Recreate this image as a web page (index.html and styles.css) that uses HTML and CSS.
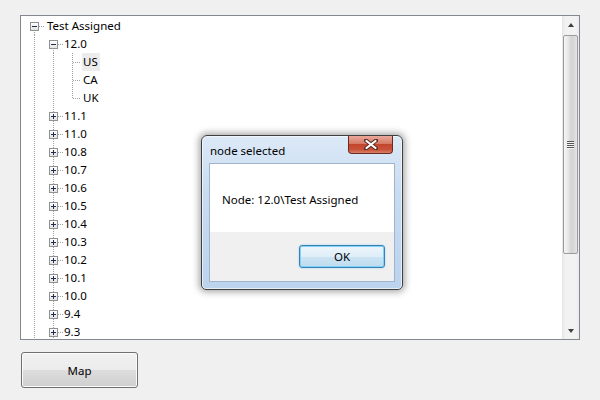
FILE: index.html
```html
<!DOCTYPE html>
<html>
<head>
<meta charset="utf-8">
<link rel="stylesheet" href="styles.css">
</head>
<body>
<div class="app">
  <div class="treebox">
    <div class="tree">
      <div class="row l0"><span class="c vb hb"><span class="pm minus"></span></span><span class="label">Test Assigned</span></div>
      <div class="row l1"><span class="c v"></span><span class="c vb hb"><span class="pm minus"></span></span><span class="label">12.0</span></div>
      <div class="row l2"><span class="c v"></span><span class="c v"></span><span class="c v h"></span><span class="label sel">US</span></div>
      <div class="row l2"><span class="c v"></span><span class="c v"></span><span class="c v h"></span><span class="label">CA</span></div>
      <div class="row l2"><span class="c v"></span><span class="c v"></span><span class="c vt h"></span><span class="label">UK</span></div>
      <div class="row l1"><span class="c v"></span><span class="c v hb"><span class="pm plus"></span></span><span class="label">11.1</span></div>
      <div class="row l1"><span class="c v"></span><span class="c v hb"><span class="pm plus"></span></span><span class="label">11.0</span></div>
      <div class="row l1"><span class="c v"></span><span class="c v hb"><span class="pm plus"></span></span><span class="label">10.8</span></div>
      <div class="row l1"><span class="c v"></span><span class="c v hb"><span class="pm plus"></span></span><span class="label">10.7</span></div>
      <div class="row l1"><span class="c v"></span><span class="c v hb"><span class="pm plus"></span></span><span class="label">10.6</span></div>
      <div class="row l1"><span class="c v"></span><span class="c v hb"><span class="pm plus"></span></span><span class="label">10.5</span></div>
      <div class="row l1"><span class="c v"></span><span class="c v hb"><span class="pm plus"></span></span><span class="label">10.4</span></div>
      <div class="row l1"><span class="c v"></span><span class="c v hb"><span class="pm plus"></span></span><span class="label">10.3</span></div>
      <div class="row l1"><span class="c v"></span><span class="c v hb"><span class="pm plus"></span></span><span class="label">10.2</span></div>
      <div class="row l1"><span class="c v"></span><span class="c v hb"><span class="pm plus"></span></span><span class="label">10.1</span></div>
      <div class="row l1"><span class="c v"></span><span class="c v hb"><span class="pm plus"></span></span><span class="label">10.0</span></div>
      <div class="row l1"><span class="c v"></span><span class="c v hb"><span class="pm plus"></span></span><span class="label">9.4</span></div>
      <div class="row l1"><span class="c v"></span><span class="c v hb"><span class="pm plus"></span></span><span class="label">9.3</span></div>
    </div>
    <div class="vscroll">
      <div class="sb-btn"><span class="arr up"></span></div>
      <div class="sb-track"><div class="thumb"><span class="grip"></span></div></div>
      <div class="sb-btn"><span class="arr down"></span></div>
    </div>
  </div>
  <button class="btn map">Map</button>

  <div class="dialog">
    <div class="titlebar"><span class="title">node selected</span></div>
    <div class="closebtn"><svg width="14" height="11" viewBox="0 0 14 11"><path d="M2 1.5 L12 9.5 M12 1.5 L2 9.5" stroke="#5a2a22" stroke-width="4" stroke-linecap="round"/><path d="M2.5 2 L11.5 9 M11.5 2 L2.5 9" stroke="#ffffff" stroke-width="2.2" stroke-linecap="round"/></svg></div>
    <div class="client">
      <div class="msg">Node: 12.0\Test Assigned</div>
      <div class="footer"><button class="btn ok">OK</button></div>
    </div>
  </div>
</div>
</body>
</html>
```

FILE: styles.css
```css
html, body {
  margin: 0;
  padding: 0;
  background: #f0f0f0;
}
body {
  font-family: "Noto Sans", "Segoe UI", sans-serif;
  font-size: 11.5px;
  color: #000;
}
.app {
  position: relative;
  width: 600px;
  height: 400px;
  padding: 15px 0 0 20px;
  box-sizing: border-box;
}
.treebox {
  width: 560px;
  height: 325px;
  box-sizing: border-box;
  border: 1px solid #828790;
  background: #fff;
  display: flex;
}
.tree {
  flex: 1;
  overflow: hidden;
  padding: 1px 0 0 4px;
}
.row {
  display: flex;
  height: 18px;
  align-items: center;
}
.c {
  position: relative;
  flex: none;
  width: 19px;
  height: 18px;
}
.c.v::before, .c.vb::before, .c.vt::before {
  content: "";
  position: absolute;
  left: 9px;
  width: 1px;
  top: 0;
  bottom: 0;
  background: repeating-linear-gradient(to bottom, #a0a0a0 0 1px, transparent 1px 2px);
}
.c.vb::before { top: 9px; }
.c.vt::before { bottom: 9px; }
.c.h::after, .c.hb::after {
  content: "";
  position: absolute;
  top: 9px;
  height: 1px;
  left: 10px;
  width: 8px;
  background: repeating-linear-gradient(to right, #a0a0a0 0 1px, transparent 1px 2px);
}
.c.hb::after {
  left: 14px;
  width: 6px;
}
.pm {
  position: absolute;
  left: 5px;
  top: 5px;
  width: 9px;
  height: 9px;
  box-sizing: border-box;
  border: 1px solid #919191;
  background: linear-gradient(#ffffff, #e3e3e3);
  z-index: 1;
}
.pm::before {
  content: "";
  position: absolute;
  left: 1px;
  top: 3px;
  width: 5px;
  height: 1px;
  background: #1f2d4f;
}
.pm.plus::after {
  content: "";
  position: absolute;
  left: 3px;
  top: 1px;
  width: 1px;
  height: 5px;
  background: #1f2d4f;
}
.label {
  padding: 0 1px;
  line-height: 18px;
  white-space: nowrap;
}
.l0 .label { margin-left: 2px; }
.label.sel { background: #ececec; padding: 0 2px 0 1px; }

/* scrollbar */
.vscroll {
  flex: none;
  width: 17px;
  display: flex;
  flex-direction: column;
  background: linear-gradient(to right, #e6e6e6, #f2f2f2 20%, #f2f2f2 80%, #ececec);
}
.sb-btn {
  height: 17px;
  flex: none;
  display: flex;
  align-items: center;
  justify-content: center;
}
.arr {
  width: 0;
  height: 0;
  border-left: 3.5px solid transparent;
  border-right: 3.5px solid transparent;
}
.arr.up { border-bottom: 4px solid #3e3e3e; }
.arr.down { border-top: 4px solid #3e3e3e; }
.sb-track {
  flex: 1;
  padding: 2px 1px 0 1px;
}
.thumb {
  height: 219px;
  box-sizing: border-box;
  border: 1px solid #9b9b9b;
  border-radius: 2px;
  background: linear-gradient(to right, #f5f5f5, #e8e8e8 30%, #d4d4d4 55%, #d9d9d9 80%, #e6e6e6);
  display: flex;
  align-items: center;
  justify-content: center;
}
.grip {
  width: 7px;
  height: 8px;
  background: repeating-linear-gradient(to bottom, #555 0 1px, #f4f4f4 1px 2px);
}

/* buttons */
.btn {
  font-family: inherit;
  font-size: 11.5px;
  color: #000;
  box-sizing: border-box;
  padding: 0;
  border-radius: 3px;
}
.map {
  display: block;
  margin: 12px 0 0 1px;
  width: 117px;
  height: 36px;
  border: 1px solid #707070;
  background: linear-gradient(#f2f2f2 0%, #ebebeb 50%, #dddddd 51%, #cfcfcf 100%);
  box-shadow: inset 0 0 0 1px #fbfbfb;
}

/* dialog */
.dialog {
  position: absolute;
  left: 201px;
  top: 135px;
  width: 202px;
  height: 155px;
  box-sizing: border-box;
  border: 1px solid #3f3f3f;
  border-radius: 6px 6px 5px 5px;
  background: linear-gradient(#dce9f7, #c7dbf1 40%, #bcd3ee);
  box-shadow: 0 0 7px 2px rgba(0,0,0,0.35), inset 0 0 0 1px rgba(255,255,255,0.6);
  padding: 0 7px 7px 7px;
  display: flex;
  flex-direction: column;
}
.titlebar {
  height: 27px;
  flex: none;
  display: flex;
  align-items: center;
}
.title {
  margin-left: 1px;
  padding-top: 2px;
  color: #000;
}
.closebtn {
  position: absolute;
  left: 146px;
  top: 0;
  width: 45px;
  height: 18px;
  box-sizing: border-box;
  border: 1px solid #6b2a20;
  border-top: none;
  border-radius: 0 0 4px 4px;
  background: linear-gradient(#e9a99b 0%, #d57a66 45%, #c3452c 50%, #c9533a 80%, #d9806a 100%);
  display: flex;
  align-items: center;
  justify-content: center;
}
.closebtn svg { display: block; }
.client {
  flex: 1;
  border: 1px solid #9fb3cc;
  background: #f0f0f0;
  display: flex;
  flex-direction: column;
}
.msg {
  height: 68px;
  background: #fff;
  padding-left: 12px;
  display: flex;
  align-items: center;
  padding-top: 3px;
  box-sizing: border-box;
}
.footer {
  flex: 1;
  display: flex;
  justify-content: flex-end;
  align-items: flex-start;
  padding: 13px 9px 0 0;
}
.ok {
  width: 86px;
  height: 23px;
  border: 1px solid #3c7fb1;
  background: linear-gradient(#ecf5fb 0%, #e0eef8 50%, #cce4f3 51%, #bedcef 100%);
  box-shadow: inset 0 0 0 1px #7fd3f7, 0 0 2px #8fd6f6;
}
```
